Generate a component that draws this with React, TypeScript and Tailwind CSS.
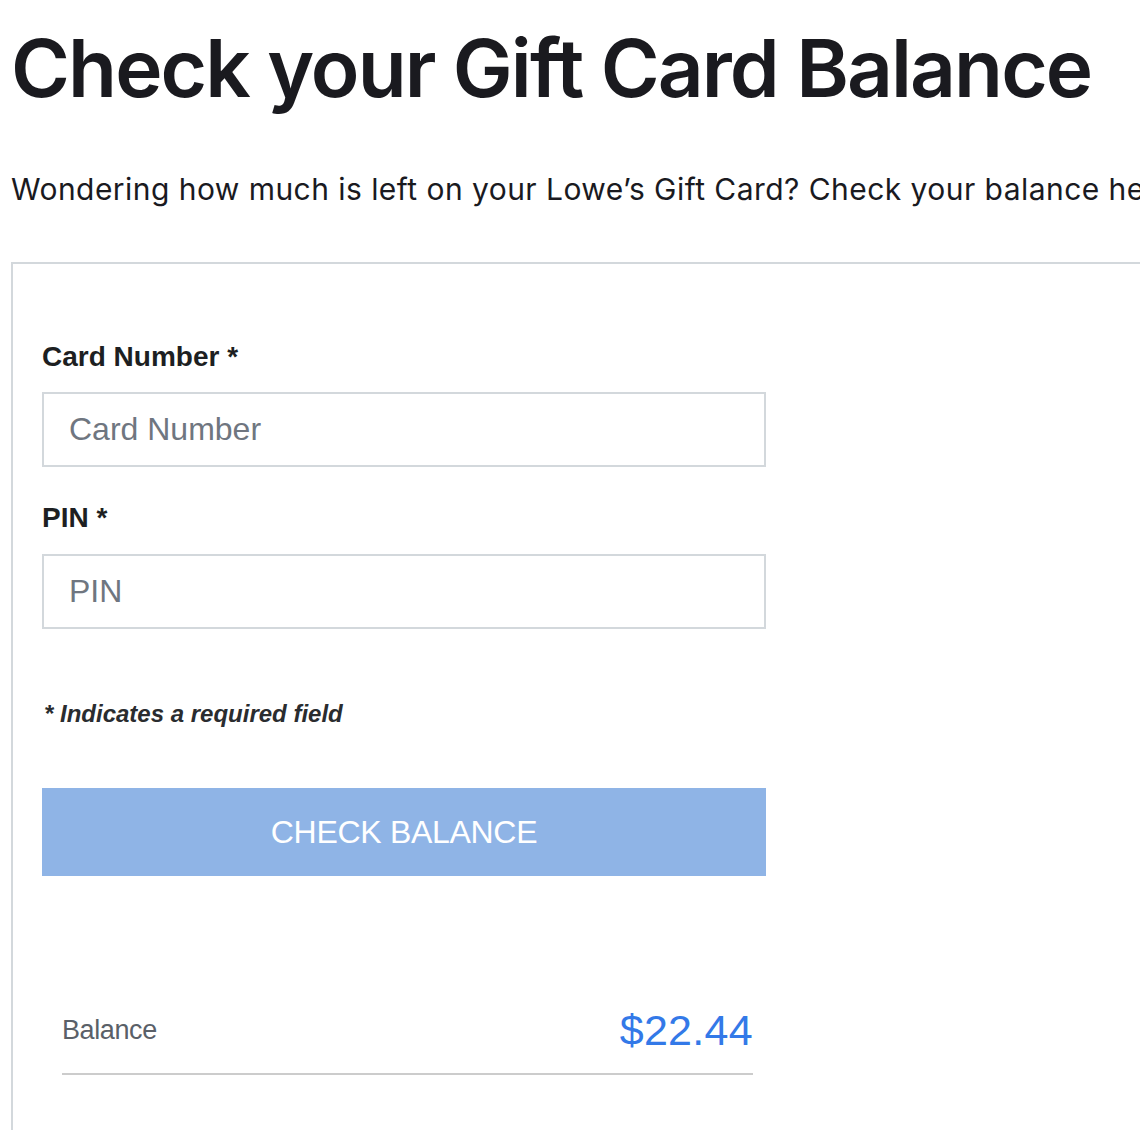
import React from "react";

const App: React.FC = () => {
  return (
    <div className="w-[1140px] h-[1130px] overflow-hidden bg-white">
      <div className="w-[1400px] pl-[11px]">
        <h1 className="font-['Inter',sans-serif] font-semibold text-[80px] leading-none tracking-[-1.9px] text-[#1a1a1f] pt-[28px] whitespace-nowrap">
          Check your Gift Card Balance
        </h1>
        <p className="font-['Inter',sans-serif] text-[30px] leading-none tracking-[0.45px] text-[#1a1a1f] mt-[66px] whitespace-nowrap">
          Wondering how much is left on your Lowe’s Gift Card? Check your balance here.
        </p>

        <div className="mt-[58px] border-2 border-[#d3d8dc] border-r-0 border-b-0 w-[1300px] h-[900px] pl-[29px] pt-[79px] font-['Liberation_Sans',Arial,sans-serif]">
          <div className="w-[724px]">
            <label className="block text-[28px] font-bold text-[#1d1f22] leading-none">Card Number *</label>
            <input
              className="mt-[21px] block w-full h-[75px] border-2 border-[#d3d8dc] px-[25px] text-[32px] text-[#1d1f22] placeholder:text-[#6f7680] outline-none"
              placeholder="Card Number"
            />

            <label className="block mt-[37px] text-[28px] font-bold text-[#1d1f22] leading-none">PIN *</label>
            <input
              className="mt-[22px] block w-full h-[75px] border-2 border-[#d3d8dc] px-[25px] text-[32px] text-[#1d1f22] placeholder:text-[#6f7680] outline-none"
              placeholder="PIN"
            />

            <p className="mt-[73px] text-[24px] font-bold italic text-[#2a2c2f] leading-none pl-[2px]">
              * Indicates a required field
            </p>

            <button className="mt-[62px] w-full h-[88px] bg-[#8fb4e6] text-white text-[32px] tracking-[-0.3px] uppercase">
              Check Balance
            </button>

            <div className="mt-[133px] ml-[20px] w-[691px] flex items-center justify-between border-b-2 border-[#cccccc] pb-[21px]">
              <span className="text-[27px] text-[#5a6068] tracking-[-0.4px] leading-none">Balance</span>
              <span className="text-[43px] text-[#3379e8] leading-none tracking-[0.3px]">$22.44</span>
            </div>
          </div>
        </div>
      </div>
    </div>
  );
};

export default App;
